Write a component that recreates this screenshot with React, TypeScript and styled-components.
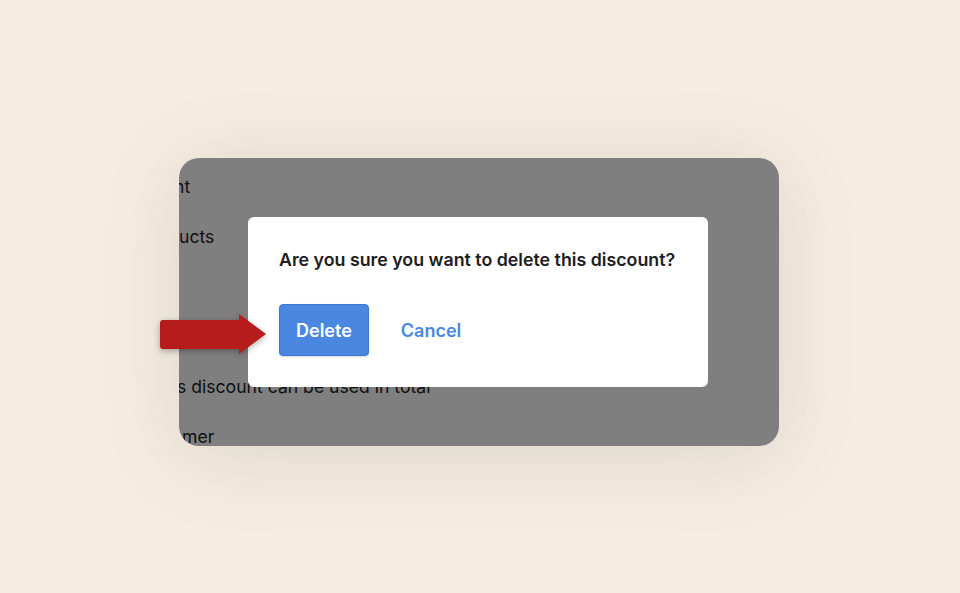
import React from "react";
import styled, { createGlobalStyle } from "styled-components";

const Global = createGlobalStyle`
  html, body { margin: 0; padding: 0; background: #f5ede1; }
  body { font-family: Inter, "Noto Sans", sans-serif; -webkit-font-smoothing: antialiased; }
`;

const Stage = styled.div`
  width: 960px;
  height: 593px;
  box-sizing: border-box;
  padding-top: 158px;
  display: flex;
  justify-content: center;
  background: #f5ede1;
  overflow: hidden;
`;

const Frame = styled.div`
  position: relative;
  width: 600px;
  height: 288px;
  margin-left: -2px;
`;

const Panel = styled.div`
  position: relative;
  width: 100%;
  height: 100%;
  border-radius: 20px;
  overflow: hidden;
  background: #ffffff;
  box-shadow: 0 10px 80px rgba(90, 80, 65, 0.15);
  padding-top: 4px;
  box-sizing: border-box;
`;

const FormLine = styled.div<{ $indent: number }>`
  height: 50px;
  line-height: 50px;
  font-size: 17.6px;
  color: #222;
  white-space: nowrap;
  margin-left: ${(p) => p.$indent}px;
`;

const Overlay = styled.div`
  position: absolute;
  inset: 0;
  background: rgba(0, 0, 0, 0.5);
  display: flex;
  align-items: center;
  justify-content: center;
`;

const Modal = styled.div`
  width: 460px;
  box-sizing: border-box;
  background: #fff;
  border-radius: 6px;
  padding: 31px 30px 31px 31px;
  display: flex;
  flex-direction: column;
  gap: 32px;
  margin-left: -2px;
`;

const Title = styled.h2`
  margin: 0;
  font-size: 17.8px;
  line-height: 24px;
  font-weight: 600;
  color: #1d1d1d;
  white-space: nowrap;
`;

const Actions = styled.div`
  display: flex;
  align-items: center;
  gap: 31px;
`;

const Button = styled.button<{ $primary?: boolean }>`
  font-family: inherit;
  font-size: 18px;
  font-weight: 600;
  height: 52px;
  padding: ${(p) => (p.$primary ? "0 16px" : "0")};
  border-radius: 4px;
  cursor: pointer;
  border: 1px solid ${(p) => (p.$primary ? "#3d79d2" : "transparent")};
  background: ${(p) => (p.$primary ? "#4a87e1" : "transparent")};
  color: ${(p) => (p.$primary ? "#ffffff" : "#4a87e1")};
  box-shadow: ${(p) => (p.$primary ? "0 1px 2px rgba(0,0,0,0.15)" : "none")};
`;

const ArrowMark = styled.svg`
  position: absolute;
  left: -22px;
  top: 154px;
  width: 112px;
  height: 44px;
  filter: drop-shadow(0 2px 3px rgba(0, 0, 0, 0.3));
`;

export default function App() {
  return (
    <>
      <Global />
      <Stage>
        <Frame>
          <Panel>
            <FormLine $indent={-5}>nt</FormLine>
            <FormLine $indent={0}>ucts</FormLine>
            <FormLine $indent={0}>&nbsp;</FormLine>
            <FormLine $indent={0}>&nbsp;</FormLine>
            <FormLine $indent={-2}>s discount can be used in total</FormLine>
            <FormLine $indent={3}>mer</FormLine>
            <Overlay>
              <Modal>
                <Title>Are you sure you want to delete this discount?</Title>
                <Actions>
                  <Button $primary>Delete</Button>
                  <Button>Cancel</Button>
                </Actions>
              </Modal>
            </Overlay>
          </Panel>
          <ArrowMark viewBox="0 0 112 44">
            <rect x="3" y="8" width="86" height="29" rx="3" fill="#b71c1c" />
            <polygon points="82,2 109,22 82,42" fill="#b71c1c" />
          </ArrowMark>
        </Frame>
      </Stage>
    </>
  );
}
